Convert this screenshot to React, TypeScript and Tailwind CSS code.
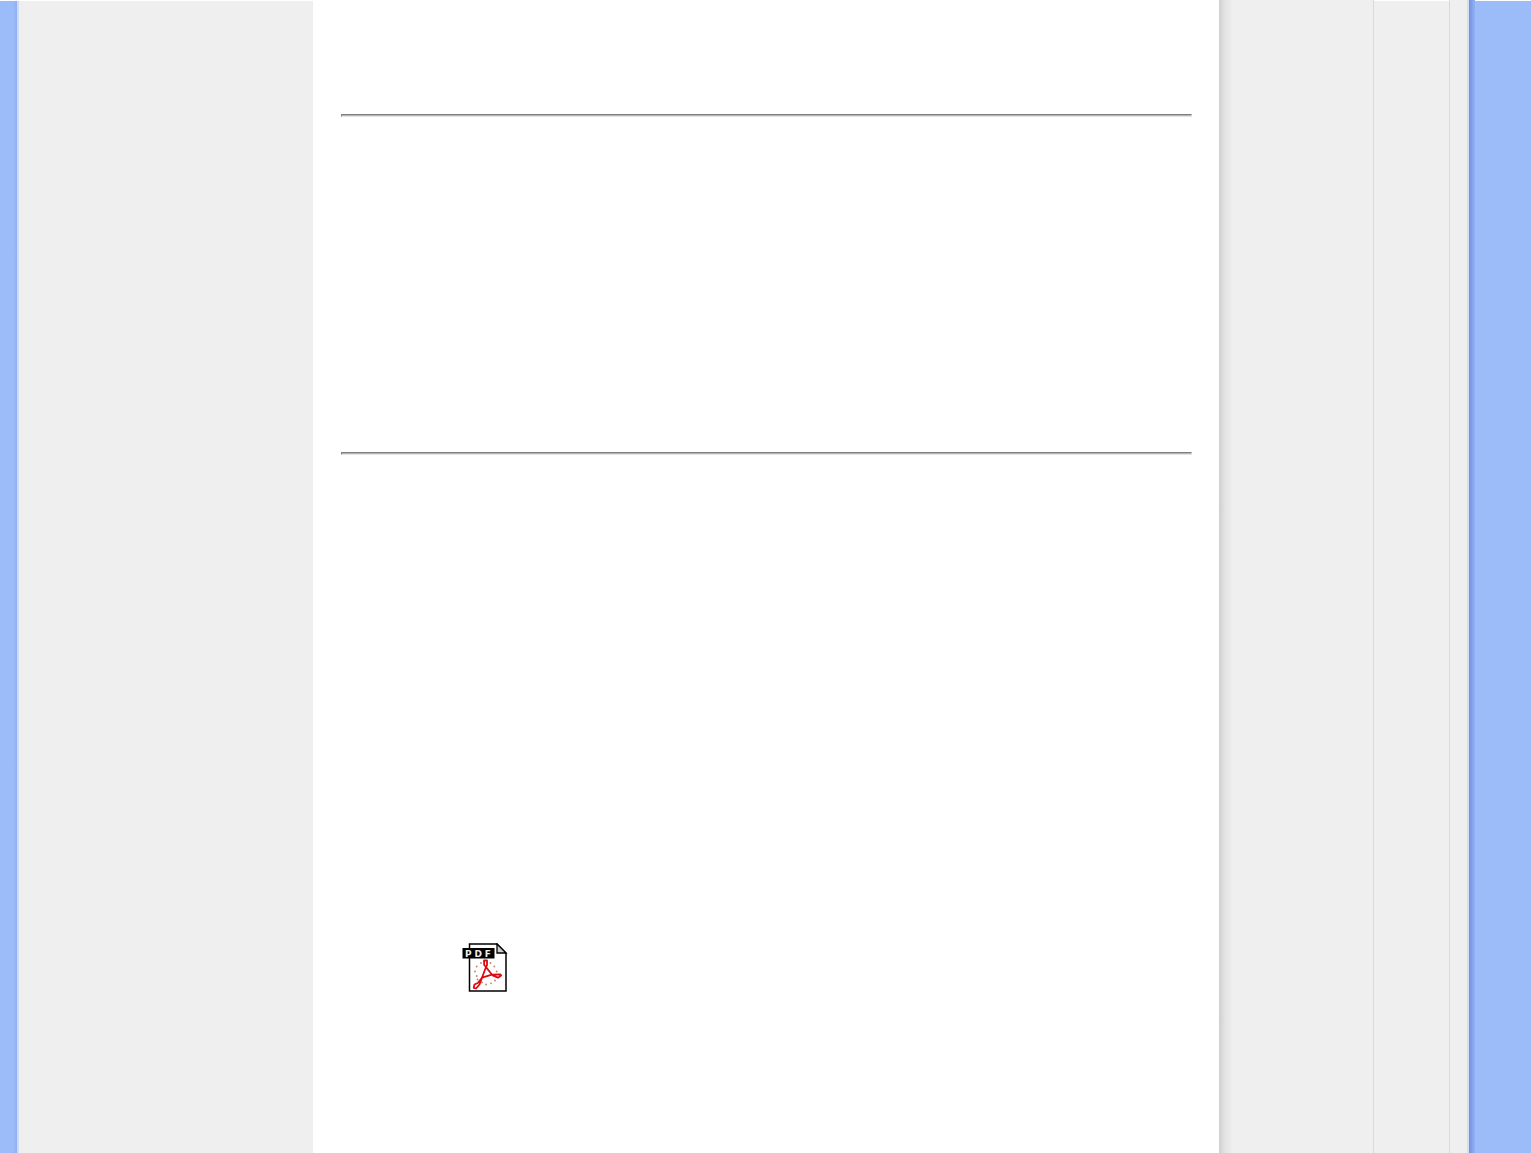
export default function App() {
  return (
    <div className="flex h-[1153px] w-[1531px] overflow-hidden bg-[#efefef]">
      {/* Left margin */}
      <div className="w-[17px] border-t border-[#fafcff] bg-linear-to-r from-[#9bbcf9] from-75% to-[#8fb0f5]" />
      <div className="w-[2px] border-t border-white bg-[#d3daf0]" />
      <div className="w-[294px] border-t border-white bg-[#efefef]" />

      {/* Content */}
      <main className="w-[906px] bg-white px-7 pt-[114px]">
        <Rule />
        <div className="h-[334.5px]" />
        <Rule />
        <a href="#" className="mt-[488px] ml-[121px] block w-[46px]">
          <PdfIcon />
        </a>
      </main>

      {/* Right margin */}
      <div className="w-[14px] bg-linear-to-r from-[#cdcfd1] via-[#e2e2e2] via-40% to-[#efefef]" />
      <div className="w-[140px] bg-[#efefef]" />
      <div className="w-px bg-[#d5dbe0]" />
      <div className="w-[75px] border-t border-white bg-[#efefef]" />
      <div className="w-px bg-[#d5dbe0]" />
      <div className="w-[17px] bg-[#efefef]" />
      <div className="w-[2px] bg-[#d6e0f5]" />
      <div className="w-[6px] bg-linear-to-r from-[#748fdc] to-[#92b3f6]" />
      <div className="flex-1 border-t border-white bg-[#9bbcf9]" />
    </div>
  );
}

function Rule() {
  return (
    <hr className="h-[3px] w-[851px] border border-t-[#7d7d7d] border-r-[#dddddd] border-b-[#e4e4e4] border-l-[#858585] bg-[#b5b5b5]" />
  );
}

function PdfIcon() {
  return (
    <svg width="46" height="50" viewBox="0 0 46 50" fill="none" role="img" aria-label="PDF">
      <path d="M7.5 1H35L44 10V48H7.5Z" fill="white" stroke="black" strokeWidth="1.5" />
      <path d="M35 1V10H44Z" fill="#cccccc" stroke="black" strokeWidth="1.3" />
      {dots.map(([x, y]) => (
        <circle key={`${x}-${y}`} cx={x} cy={y} r="0.9" fill="#b98560" />
      ))}
      {/* Ribbon: three loops joined by a triangle */}
      <g stroke="#dc0a12" strokeWidth="1.8" strokeLinejoin="round">
        <path d="M22 17.5H25V22L24 24L22.2 22Z" />
        <path d="M24 24L30 31.7L20 34.7Z" />
        <path d="M30 31.7L38.5 31.5L39.2 32.5L36 34.7L30 32.1" />
        <path d="M20 34.7L17.5 41.5L14 45.5L11.7 44.8L12.5 41.5L15.8 40Z" />
      </g>
      <rect x="0.5" y="5" width="32" height="10.5" fill="black" />
      <text
        y="13.5"
        fill="#eeeeee"
        fontSize="9"
        fontWeight="bold"
        className="font-['DejaVu_Sans',sans-serif]"
      >
        <tspan x="3">P</tspan>
        <tspan x="12.5">D</tspan>
        <tspan x="22.8">F</tspan>
      </text>
    </svg>
  );
}

const dots = [
  [19, 20],
  [28.5, 20],
  [14.7, 23.5],
  [32.3, 23.5],
  [13, 28.5],
  [34.7, 28.5],
  [14.7, 33],
  [15.5, 36.5],
  [20, 39.5],
  [24, 41.5],
  [29, 40.3],
  [33, 37.5],
];
